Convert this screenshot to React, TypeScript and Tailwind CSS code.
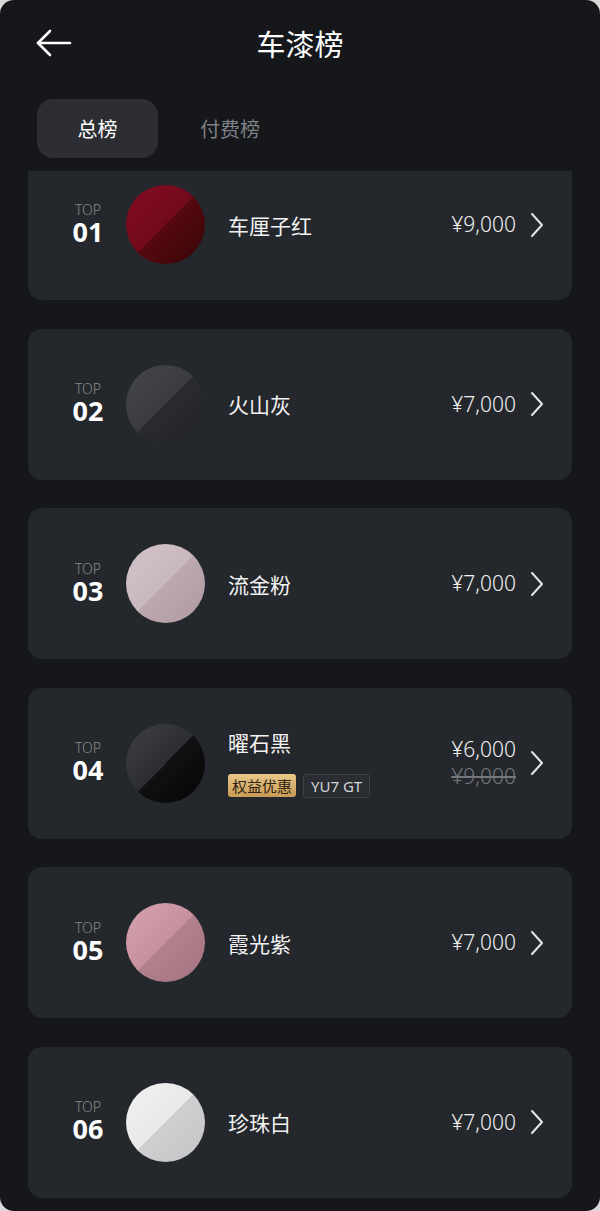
import React from 'react';

type Paint = {
  rank: string;
  name: string;
  price: string;
  oldPrice?: string;
  swatch: string;
  tags?: boolean;
};

const paints: Paint[] = [
  {
    rank: '01',
    name: '车厘子红',
    price: '¥9,000',
    swatch: 'bg-[linear-gradient(135deg,#850b21_0%,#720a1c_50%,#560910_50%,#380406_100%)]',
  },
  {
    rank: '02',
    name: '火山灰',
    price: '¥7,000',
    swatch: 'bg-[linear-gradient(135deg,#44464b_0%,#3a3c41_50%,#2a2b30_50%,#222327_100%)]',
  },
  {
    rank: '03',
    name: '流金粉',
    price: '¥7,000',
    swatch: 'bg-[linear-gradient(135deg,#d4c5ca_0%,#c8b7bd_50%,#bca8af_50%,#ae99a1_100%)]',
  },
  {
    rank: '04',
    name: '曜石黑',
    price: '¥6,000',
    oldPrice: '¥9,000',
    swatch: 'bg-[linear-gradient(135deg,#404146_0%,#2c2d31_50%,#111113_50%,#050505_100%)]',
    tags: true,
  },
  {
    rank: '05',
    name: '霞光紫',
    price: '¥7,000',
    swatch: 'bg-[linear-gradient(135deg,#d6a3b0_0%,#c7909e_50%,#b3808d_50%,#a47380_100%)]',
  },
  {
    rank: '06',
    name: '珍珠白',
    price: '¥7,000',
    swatch: 'bg-[linear-gradient(135deg,#f2f2f3_0%,#e8e8e9_50%,#cfcfd1_50%,#c4c4c6_100%)]',
  },
];

const cjk = "font-['Noto_Sans_CJK_SC','Noto_Sans',sans-serif]";

const Chevron = () => (
  <svg width="14" height="26" viewBox="0 0 14 26" fill="none" className="shrink-0">
    <polyline points="2,2 12,13 2,24" stroke="#e6e6e6" strokeWidth="2" strokeLinecap="round" strokeLinejoin="round" />
  </svg>
);

const PaintCard = ({ item }: { item: Paint }) => (
  <div className="flex h-[151px] shrink-0 items-center rounded-[14px] bg-[#24272c] pl-[40px] pr-[28px]">
    <div className="flex w-[40px] flex-col items-center">
      <span className="text-[14px] font-light leading-[14px] text-[#86888d] font-['Noto_Sans',sans-serif]">TOP</span>
      <span className="text-[27px] font-bold leading-[30px] text-white font-['Noto_Sans',sans-serif]">{item.rank}</span>
    </div>
    <div className={`ml-[18px] h-[79px] w-[79px] shrink-0 rounded-full ${item.swatch}`} />
    <div className="ml-[23px] flex flex-1 flex-col justify-center">
      <span className={`text-[21px] leading-[26px] text-[#f2f2f2] ${cjk}`}>{item.name}</span>
      {item.tags && (
        <div className="mt-[19px] flex items-center gap-[7px]">
          <span className={`rounded-[3px] bg-[linear-gradient(180deg,#e9c98a_0%,#c89a55_100%)] px-[4px] text-[15px] leading-[23px] text-[#2e2210] ${cjk}`}>
            权益优惠
          </span>
          <span className="rounded-[3px] border border-[#3d4045] bg-[#2a2d32] px-[7px] text-[15px] leading-[22px] text-[#d4d4d6] font-['Noto_Sans',sans-serif]">
            YU7 GT
          </span>
        </div>
      )}
    </div>
    <div className="flex flex-col items-end">
      <span className="text-[21px] font-light leading-[27px] text-[#f0f0f0] font-['Noto_Sans',sans-serif]">{item.price}</span>
      {item.oldPrice && (
        <span className="text-[21px] font-light leading-[27px] text-[#75777c] line-through font-['Noto_Sans',sans-serif]">
          {item.oldPrice}
        </span>
      )}
    </div>
    <div className="ml-[14px]">
      <Chevron />
    </div>
  </div>
);

export default function App() {
  return (
    <div className="h-[1211px] w-[600px] bg-[#d9d9d9]">
      <div className="flex h-full flex-col overflow-hidden rounded-[14px] bg-[#15171b]">
        {/* header */}
        <div className="relative flex h-[86px] shrink-0 items-center justify-center">
          <svg width="36" height="28" viewBox="0 0 36 28" fill="none" className="absolute left-[36px] top-[29px]">
            <polyline points="14,2 2,14 14,26" stroke="#ffffff" strokeWidth="2.6" strokeLinecap="round" strokeLinejoin="round" />
            <line x1="2" y1="14" x2="34" y2="14" stroke="#ffffff" strokeWidth="2.6" strokeLinecap="round" />
          </svg>
          <span className={`text-[29px] leading-[34px] text-white ${cjk}`}>车漆榜</span>
        </div>

        {/* tabs */}
        <div className="mt-[13px] flex h-[59px] shrink-0 items-center px-[37px]">
          <div className={`flex h-full w-[121px] items-center justify-center rounded-[16px] bg-[#2c2e33] text-[20px] text-white ${cjk}`}>
            总榜
          </div>
          <div className={`ml-[42px] text-[20px] text-[#7e8085] ${cjk}`}>付费榜</div>
        </div>

        {/* list */}
        <div className="mt-[13px] flex-1 overflow-hidden px-[28px]">
          <div className="-mt-[22px] flex flex-col gap-[28.5px]">
            {paints.map((p) => (
              <PaintCard key={p.rank} item={p} />
            ))}
          </div>
        </div>
      </div>
    </div>
  );
}
